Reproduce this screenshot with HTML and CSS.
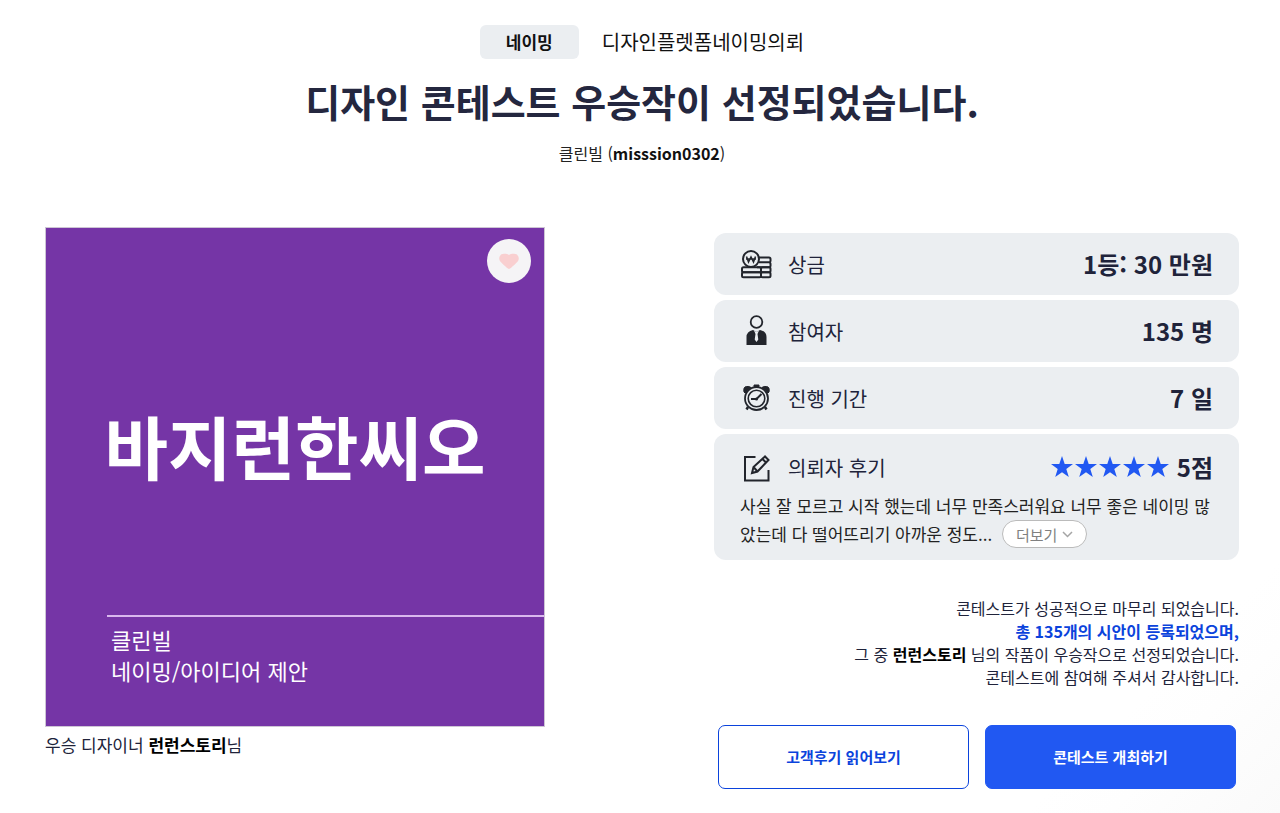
FILE: index.html
```html
<!DOCTYPE html>
<html lang="ko">
<head>
    <meta charset="UTF-8">
    <meta name="viewport" content="width=device-width, initial-scale=1.0">
    <title>디자인 콘테스트 우승작</title>
    <link rel="stylesheet" href="styles.css">
</head>
<body>
    <header class="header">
        <div class="topic">
            <span class="badge">네이밍</span>
            <span class="topic-name">디자인플렛폼네이밍의뢰</span>
        </div>
        <h1 class="title">디자인 콘테스트 우승작이 선정되었습니다.</h1>
        <p class="client">클린빌 (<strong>misssion0302</strong>)</p>
    </header>

    <main class="content">
        <section class="winner">
            <div class="artwork">
                <button class="like-button" type="button" aria-label="좋아요">
                    <svg width="20" height="17" viewBox="0 0 20 17"><path d="M10 16 C9 16 4 11.500 1.500 8.800 C-1 6 .2 .8 5 .8 C7.500 .8 9.200 1.200 10 2 C10.800 1.200 12.500 .8 15 .8 C19.800 .8 21 6 18.500 8.800 C16 11.500 11 16 10 16 Z" fill="#f9cfd0"/></svg>
                </button>
                <div class="artwork-name">바지런한씨오</div>
                <div class="artwork-info">
                    <p>클린빌</p>
                    <p>네이밍/아이디어 제안</p>
                </div>
            </div>
            <p class="designer">우승 디자이너 <strong>런런스토리</strong>님</p>
        </section>

        <section class="summary">
            <div class="cards">
                <div class="card">
                    <div class="card-row">
                        <svg class="icon" viewBox="0 0 32 32" fill="none" stroke="#22252c" stroke-width="2">
                            <path d="M18 9.500 H29 Q30.500 9.500 30.500 11 V13 Q30.500 14.300 29 14.300 H19 M20 14.300 H29 Q30.500 14.300 30.500 16 V18 Q30.500 19.300 29 19.300 H17"/>
                            <rect x="2" y="19.300" width="19" height="5" rx="1.500"/>
                            <rect x="2" y="24.300" width="19" height="5" rx="1.500"/>
                            <rect x="21" y="19.300" width="9.500" height="5" rx="1.500"/>
                            <rect x="21" y="24.300" width="9.500" height="5" rx="1.500"/>
                            <circle cx="11" cy="11" r="8" fill="#ebeef1"/>
                            <path d="M6.500 8.500 L8.500 14 L11 9 L13.500 14 L15.500 8.500 M6 11 H16" stroke-width="1.500"/>
                        </svg>
                        <span class="label">상금</span>
                        <strong class="value">1등: 30 만원</strong>
                    </div>
                </div>
                <div class="card">
                    <div class="card-row">
                        <svg class="icon" viewBox="0 0 32 32">
                            <circle cx="16.500" cy="7" r="5.800" fill="none" stroke="#22252c" stroke-width="1.800"/>
                            <path d="M6.500 30 V22 Q6.500 16.500 13 15 L16.500 17 L20 15 Q26.500 16.500 26.500 22 V30 Z" fill="#22252c"/>
                            <path d="M14 15.500 L16.500 17 L19 15.500 L17.500 19 L18.300 24.500 L16.500 27 L14.700 24.500 L15.500 19 Z" fill="#ebeef1"/>
                        </svg>
                        <span class="label">참여자</span>
                        <strong class="value">135 명</strong>
                    </div>
                </div>
                <div class="card">
                    <div class="card-row">
                        <svg class="icon" viewBox="0 0 32 32" fill="none" stroke="#22252c" stroke-width="1.800">
                            <path d="M4 10 Q3 5 6.500 4.500 Q9 4 11 5.500 L5 11 Z M29 10 Q30 5 26.500 4.500 Q24 4 22 5.500 L28 11 Z M14 3 H19 V4.500 H14 Z" fill="#22252c" stroke-width="1"/>
                            <path d="M8 25 L6.500 27.500 M25 25 L26.500 27.500" stroke-width="2.500"/>
                            <circle cx="16.500" cy="16.500" r="11.500" fill="#ebeef1"/>
                            <circle cx="16.500" cy="16.500" r="8.300" stroke-width="1.600"/>
                            <path d="M11 17 H16.500 L21.500 12" stroke-width="2"/>
                            <circle cx="16.500" cy="17" r="1.500" fill="#22252c" stroke="none"/>
                        </svg>
                        <span class="label">진행 기간</span>
                        <strong class="value">7 일</strong>
                    </div>
                </div>
                <div class="card review">
                    <div class="card-row">
                        <svg class="icon" viewBox="0 0 32 32" fill="none" stroke="#22252c" stroke-width="2">
                            <path d="M15.500 6 H5 V29.500 H28.500 V19"/>
                            <path d="M12 22 L13.500 16 L25 5.500 L28.500 9 L17.500 20.500 Z M22.500 8 L26 11.500 M13.500 16 L17.500 20.500"/>
                        </svg>
                        <span class="label">의뢰자 후기</span>
                        <span class="stars" role="img" aria-label="별점 5점">
                            <svg class="star" viewBox="0 0 22 22"><path d="M11 0 L13.700 8 H22 L15.300 13 L17.800 21 L11 16.200 L4.200 21 L6.700 13 L0 8 H8.300 Z"/></svg>
                            <svg class="star" viewBox="0 0 22 22"><path d="M11 0 L13.700 8 H22 L15.300 13 L17.800 21 L11 16.200 L4.200 21 L6.700 13 L0 8 H8.300 Z"/></svg>
                            <svg class="star" viewBox="0 0 22 22"><path d="M11 0 L13.700 8 H22 L15.300 13 L17.800 21 L11 16.200 L4.200 21 L6.700 13 L0 8 H8.300 Z"/></svg>
                            <svg class="star" viewBox="0 0 22 22"><path d="M11 0 L13.700 8 H22 L15.300 13 L17.800 21 L11 16.200 L4.200 21 L6.700 13 L0 8 H8.300 Z"/></svg>
                            <svg class="star" viewBox="0 0 22 22"><path d="M11 0 L13.700 8 H22 L15.300 13 L17.800 21 L11 16.200 L4.200 21 L6.700 13 L0 8 H8.300 Z"/></svg>
                        </span>
                        <strong class="value">5점</strong>
                    </div>
                    <p class="review-text">사실 잘 모르고 시작 했는데 너무 만족스러워요 너무 좋은 네이밍 많았는데 다 떨어뜨리기 아까운 정도...
                        <button class="more-button" type="button">더보기
                            <svg width="11" height="7" viewBox="0 0 11 7"><path d="M1 1 L5.500 5.500 L10 1" fill="none" stroke="#a5a5a5" stroke-width="1.500"/></svg>
                        </button>
                    </p>
                </div>
            </div>

            <div class="message">
                <p>콘테스트가 성공적으로 마무리 되었습니다.</p>
                <p class="highlight">총 135개의 시안이 등록되었으며,</p>
                <p>그 중 <strong>런런스토리</strong> 님의 작품이 우승작으로 선정되었습니다.</p>
                <p>콘테스트에 참여해 주셔서 감사합니다.</p>
            </div>

            <div class="actions">
                <a class="action outline" href="#">고객후기 읽어보기</a>
                <a class="action filled" href="#">콘테스트 개최하기</a>
            </div>
        </section>
    </main>
</body>
</html>
```
FILE: styles.css
```css
* {
    box-sizing: border-box;
}
body {
    margin: 0;
    min-height: 100vh;
    font-family: "Noto Sans CJK KR", sans-serif;
    font-size: 16px;
    color: #20233a;
    background: linear-gradient(315deg, #fafafa 0, #fefefe 120px, #fff 180px);
}
h1, p {
    margin: 0;
}
button {
    font-family: inherit;
    cursor: pointer;
}
.header {
    padding: 25px 40px 0 44px;
    text-align: center;
}
.topic {
    display: flex;
    justify-content: center;
    align-items: center;
    gap: 23px;
    color: #111;
}
.badge {
    padding: 0 26px;
    border-radius: 6px;
    background-color: #ebeef1;
    font-size: 17px;
    font-weight: bold;
    line-height: 34px;
}
.topic-name {
    font-size: 20px;
    line-height: 34px;
}
.title {
    margin-top: 14px;
    font-size: 38px;
    font-weight: bold;
    line-height: 56px;
    color: #24273f;
}
.client {
    margin-top: 12px;
    line-height: 24px;
    color: #222;
}
.client strong {
    color: #111;
}
.content {
    display: grid;
    grid-template-columns: 20fr 21fr;
    gap: 169px;
    padding: 62px 41px 22px 45px;
}
.artwork {
    position: relative;
    display: flex;
    flex-direction: column;
    aspect-ratio: 1;
    border: 1px solid #cdc5d4;
    background-color: #7535a6;
    color: #fff;
}
.like-button {
    position: absolute;
    top: 11px;
    right: 13px;
    display: flex;
    justify-content: center;
    align-items: center;
    width: 44px;
    height: 44px;
    padding: 0;
    border: none;
    border-radius: 50%;
    background-color: #f5f4f6;
}
.artwork-name {
    flex: 1;
    display: flex;
    align-items: center;
    justify-content: center;
    padding-top: 46px;
    font-size: 69px;
    font-weight: bold;
}
.artwork-info {
    height: 111px;
    margin-left: 61px;
    padding: 7px 4px;
    border-top: 2px solid #d9b8ee;
    font-size: 22px;
    line-height: 31px;
}
.designer {
    margin-top: 5px;
    font-size: 17px;
    line-height: 26px;
}
.designer strong, .message strong {
    color: #000;
}
.cards {
    display: flex;
    flex-direction: column;
    gap: 5px;
    padding-top: 6px;
}
.card {
    padding: 0 26px;
    border-radius: 12px;
    background-color: #ebeef1;
}
.card-row {
    display: flex;
    align-items: center;
    height: 62px;
}
.icon {
    width: 32px;
    height: 32px;
    margin-right: 16px;
}
.label {
    flex: 1;
    font-size: 20px;
}
.value {
    font-size: 24px;
    line-height: 36px;
}
.stars {
    display: flex;
    gap: 2px;
    margin-right: 8px;
}
.star {
    width: 22px;
    height: 22px;
    fill: #2158f2;
}
.review {
    padding-top: 8px;
    padding-bottom: 12px;
}
.review .card-row {
    height: 50px;
}
.review-text {
    font-size: 17px;
    line-height: 28px;
    color: #222;
}
.more-button {
    display: inline-flex;
    align-items: center;
    gap: 5px;
    height: 28px;
    margin-left: 5px;
    padding: 0 13px;
    border: 1px solid #bbb;
    border-radius: 14px;
    background-color: #fff;
    font-size: 15px;
    color: #808080;
    vertical-align: top;
}
.message {
    margin-top: 37px;
    line-height: 23px;
    text-align: right;
}
.message .highlight {
    font-weight: bold;
    color: #0b43dc;
}
.actions {
    display: flex;
    align-items: center;
    gap: 16px;
    margin-top: 36px;
    padding: 0 3px 0 4px;
}
.action {
    flex: 1;
    border: 1px solid #0b43dc;
    border-radius: 7px;
    font-size: 15px;
    font-weight: bold;
    line-height: 62px;
    text-align: center;
    text-decoration: none;
}
.outline {
    background-color: #fff;
    color: #0b43dc;
}
.filled {
    border-color: #2158f2;
    background-color: #2158f2;
    color: #fff;
}
```
